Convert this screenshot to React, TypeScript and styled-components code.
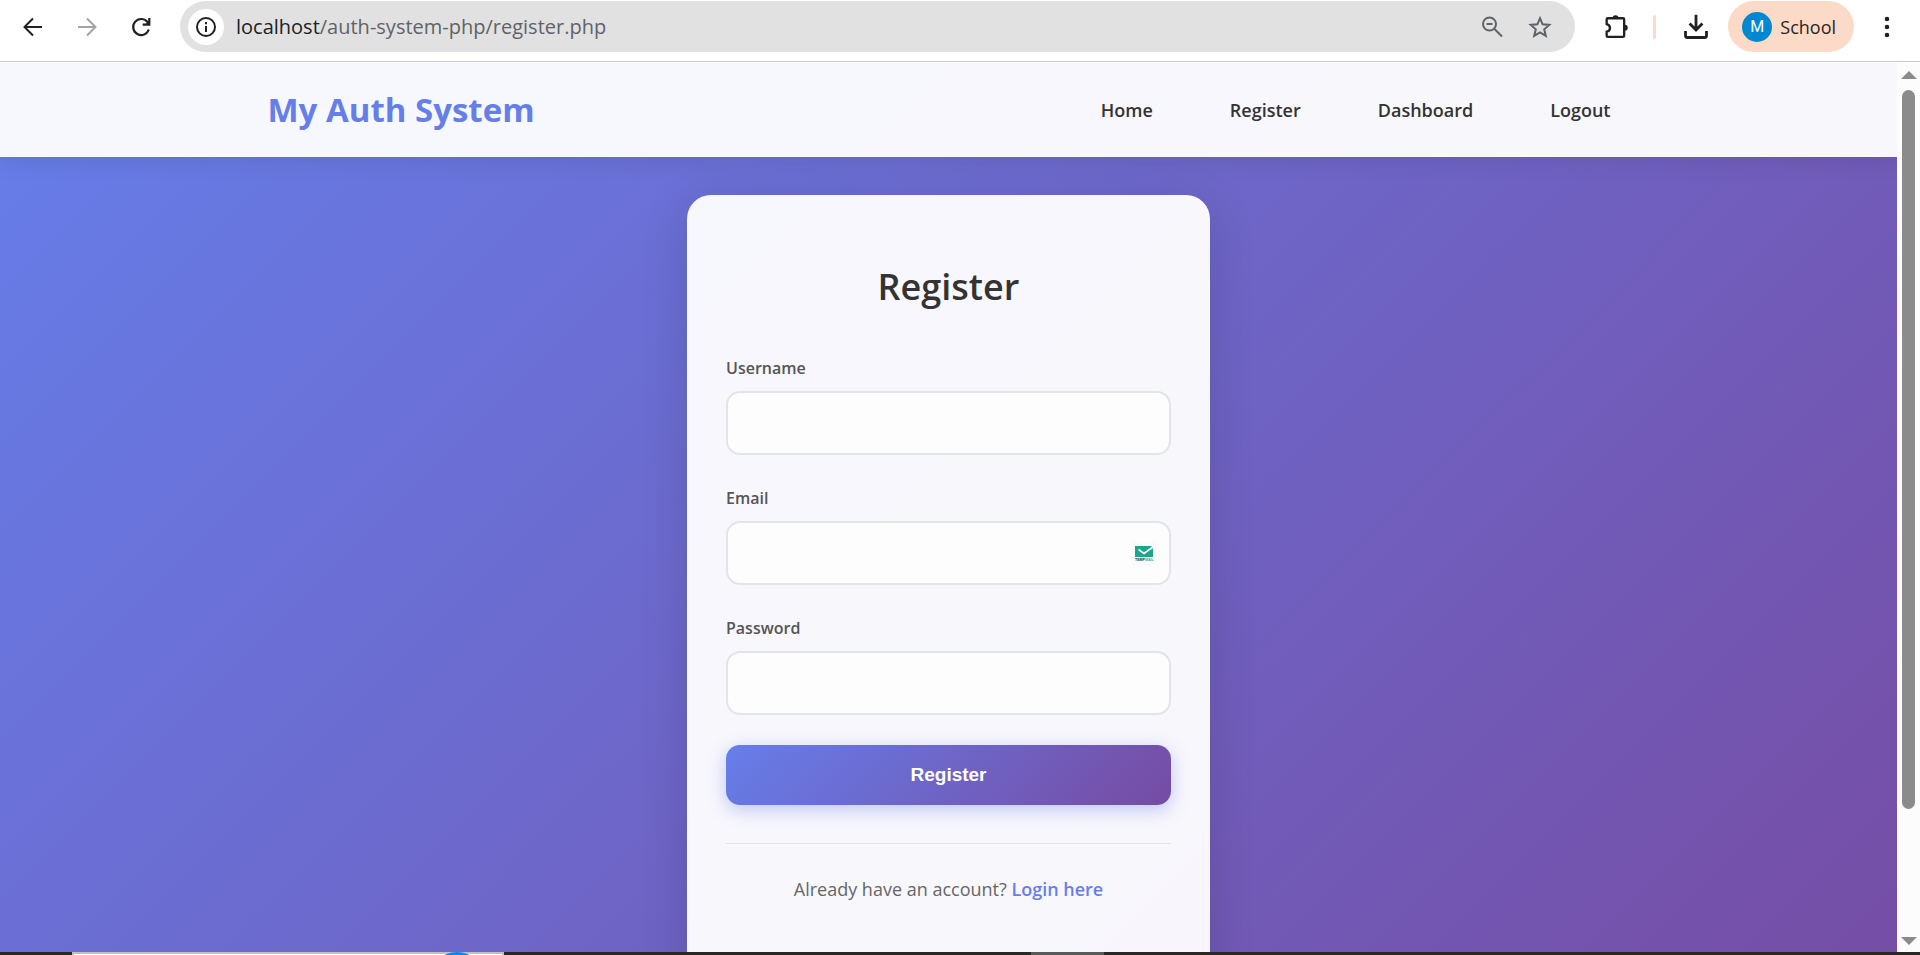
import React from "react";
import styled, { createGlobalStyle } from "styled-components";

const GlobalStyle = createGlobalStyle`
  *, *::before, *::after { box-sizing: border-box; }
  body { margin: 0; font-family: "Segoe UI", "Open Sans", sans-serif; }
`;

const Window = styled.div`
  display: flex;
  flex-direction: column;
  height: 100vh;
  overflow: hidden;
  background: #fff;
`;

/* ---------- browser toolbar ---------- */

const Toolbar = styled.div`
  display: flex;
  align-items: center;
  flex: none;
  height: 62px;
  margin-bottom: 1px;
  padding: 1px 16px 9px 16px;
  background: #fff;
  border-bottom: 1px solid #c8c8c8;
`;

const IconButton = styled.button<{ $color?: string; $gap?: number }>`
  display: grid;
  place-items: center;
  flex: none;
  width: 34px;
  height: 34px;
  margin: 0 ${(p) => p.$gap ?? 0}px 0 0;
  padding: 0;
  border: 0;
  background: none;
  color: ${(p) => p.$color ?? "#202124"};
`;

const AddressBar = styled.div`
  display: flex;
  align-items: center;
  flex: 1;
  height: 51px;
  margin-right: 24px;
  padding: 0 18px 0 8px;
  border-radius: 26px;
  background: #e1e1e1;
`;

const SiteInfo = styled.button`
  display: grid;
  place-items: center;
  width: 36px;
  height: 36px;
  padding: 0;
  border: 0;
  border-radius: 50%;
  background: #fff;
  color: #202124;
`;

const Url = styled.div`
  flex: 1;
  margin-left: 12px;
  font-size: 20px;
  line-height: 28px;
  color: #5f6368;
`;

const Host = styled.span`
  color: #202124;
`;

const Divider = styled.span`
  flex: none;
  width: 3px;
  height: 24px;
  margin-right: 23px;
  border-radius: 2px;
  background: #fcdac8;
`;

const Profile = styled.button`
  display: flex;
  align-items: center;
  gap: 8px;
  flex: none;
  height: 51px;
  margin-right: 16px;
  padding: 0 18px 0 14px;
  border: 0;
  border-radius: 26px;
  background: #fcdac8;
  font: 400 18px "Segoe UI", "Open Sans", sans-serif;
  color: #2b2420;
`;

const Avatar = styled.span`
  display: grid;
  place-items: center;
  width: 30px;
  height: 30px;
  border-radius: 50%;
  background: #0288d1;
  font: 400 16px Roboto, sans-serif;
  color: #fff;
`;

/* ---------- page ---------- */

const Viewport = styled.div`
  display: flex;
  flex: 1;
  min-height: 0;
`;

const Page = styled.div`
  flex: 1;
  overflow: hidden;
  background: linear-gradient(135deg, #667eea 0%, #764ba2 100%) 0 0 / 100% 117%;
`;

const Header = styled.header`
  background: rgba(255, 255, 255, 0.95);
  box-shadow: 0 2px 24px rgba(0, 0, 0, 0.1);
`;

const HeaderInner = styled.div`
  display: flex;
  align-items: center;
  justify-content: space-between;
  max-width: 1394px;
  height: 94px;
  margin: 0 auto;
  padding: 0 16px;
`;

const Logo = styled.h1`
  margin: 0;
  font-size: 33px;
  font-weight: 700;
  line-height: 48px;
  color: #667eea;
`;

const Nav = styled.nav`
  display: flex;
  gap: 77px;
  padding-right: 19px;
`;

const NavLink = styled.a`
  font-size: 18px;
  font-weight: 600;
  line-height: 28px;
  color: #333;
  text-decoration: none;
`;

const Card = styled.main`
  max-width: 523px;
  margin: 38px auto;
  padding: 64px 39px 77px;
  border-radius: 24px;
  background: rgba(255, 255, 255, 0.95);
  box-shadow: 0 10px 48px rgba(0, 0, 0, 0.14);
`;

const Title = styled.h2`
  margin: 0 0 40px;
  font-size: 36px;
  font-weight: 600;
  line-height: 56px;
  text-align: center;
  color: #333;
`;

const Field = styled.div`
  display: flex;
  flex-direction: column;
  gap: 9px;
  margin-bottom: 30px;
`;

const Label = styled.label`
  font-size: 16px;
  font-weight: 600;
  line-height: 27px;
  color: #555;
`;

const InputBox = styled.div`
  display: flex;
  align-items: center;
  height: 64px;
  padding-right: 13px;
  border: 2px solid #e1e5e9;
  border-radius: 14px;
  background: #fdfdfd;
`;

const Input = styled.input`
  flex: 1;
  min-width: 0;
  height: 100%;
  padding: 0 18px;
  border: 0;
  outline: 0;
  background: transparent;
  font-size: 18px;
`;

const Submit = styled.button`
  display: block;
  width: 100%;
  height: 60px;
  border: 0;
  border-radius: 14px;
  background: linear-gradient(135deg, #667eea 0%, #764ba2 100%);
  box-shadow: 0 5px 18px rgba(102, 126, 234, 0.4);
  font: 700 19px "Liberation Sans", Arial, sans-serif;
  color: #fff;
`;

const Footer = styled.p`
  margin: 38px 0 0;
  padding-top: 30px;
  border-top: 1px solid #e1e5e9;
  font-size: 18px;
  line-height: 30px;
  text-align: center;
  color: #666;
`;

const LoginLink = styled.a`
  font-weight: 600;
  color: #667eea;
  text-decoration: none;
`;

/* ---------- scrollbar ---------- */

const Scrollbar = styled.div`
  display: flex;
  flex-direction: column;
  align-items: center;
  flex: none;
  width: 23px;
  padding: 8px 0 7px;
  background: #fcfcfc;
`;

const Track = styled.div`
  flex: 1;
  width: 13px;
  margin: 11px 0;
`;

const Thumb = styled.div`
  height: 86%;
  border-radius: 7px;
  background: #8b8b8b;
`;

/* ---------- desktop strip under the browser ---------- */

const Desktop = styled.div`
  display: flex;
  flex: none;
  height: 3px;
  overflow: hidden;
  background: #2a2724;
`;

const Preview = styled.div`
  display: flex;
  justify-content: flex-end;
  width: 432px;
  margin-left: 72px;
  padding-right: 32px;
  border: 2px solid #c0c0c0;
  border-bottom: 0;
  background: #fff;
`;

const PreviewDot = styled.svg`
  flex: none;
  margin-top: -2px;
`;

const ActiveTab = styled.div`
  width: 73px;
  margin-left: 527px;
  background: #585b57;
`;

const Stroke = ({ children, size = 24, width = 2 }: { children: React.ReactNode; size?: number; width?: number }) => (
  <svg width={size} height={size} viewBox="0 0 24 24" fill="none" stroke="currentColor" strokeWidth={width} aria-hidden="true">
    {children}
  </svg>
);

const Arrow = ({ down = false }: { down?: boolean }) => (
  <svg width="16" height="8" viewBox="0 0 16 8" fill="#8b8b8b" aria-hidden="true">
    <path d={down ? "M0 0H16L8 8Z" : "M0 8H16L8 0Z"} />
  </svg>
);

const TempMailIcon = () => (
  <svg width="24" height="24" viewBox="0 0 24 24" aria-hidden="true">
    <rect width="24" height="24" fill="#fafafa" />
    <path d="M3 5H19L21 7V16H3Z" fill="#1fa58a" />
    <path d="M6.500 8.500L12 12.500L21 6" fill="none" stroke="#fff" strokeWidth="1.600" />
    <text x="3" y="20" fontSize="3.600" fontWeight="700" fontFamily="Liberation Sans, sans-serif" fill="#16324a">
      TEMP<tspan fill="#1fb59a">MAIL</tspan>
    </text>
  </svg>
);

const links = ["Home", "Register", "Dashboard", "Logout"];

const fields = [
  { id: "username", label: "Username", type: "text" },
  { id: "email", label: "Email", type: "email" },
  { id: "password", label: "Password", type: "password" },
];

export default function App() {
  return (
    <Window>
      <GlobalStyle />
      <Toolbar>
        <IconButton aria-label="Back" $gap={20}>
          <Stroke><path d="M21 12H4M12 3.500L3.500 12L12 20.500" /></Stroke>
        </IconButton>
        <IconButton aria-label="Forward" $color="#a3a3a3" $gap={20}>
          <Stroke><path d="M3 12H20M12 3.500L20.500 12L12 20.500" /></Stroke>
        </IconButton>
        <IconButton aria-label="Reload" $gap={22}>
          <Stroke width={2.2}>
            <path d="M19.800 14.500A8 8 0 1 1 18.300 6.800L20 8.800" />
            <path d="M20.300 3V9.600H13.700" />
            <path d="M20.300 5.500V9.600H16Z" fill="currentColor" stroke="none" />
          </Stroke>
        </IconButton>
        <AddressBar>
          <SiteInfo aria-label="Site information">
            <Stroke><circle cx="12" cy="12" r="9" /><path d="M12 11V17M12 7V9.200" /></Stroke>
          </SiteInfo>
          <Url><Host>localhost</Host>/auth-system-php/register.php</Url>
          <IconButton aria-label="Zoom" $color="#5f6368" $gap={14}>
            <Stroke><circle cx="9.500" cy="9" r="6.500" /><path d="M14 13.500L22 21.500M6.500 9H12.500" /></Stroke>
          </IconButton>
          <IconButton aria-label="Bookmark" $color="#5f6368">
            <Stroke><path d="M12 3.200L14.600 9.300L21.300 9.900L16.200 14.300L17.800 20.900L12 17.400L6.200 20.900L7.800 14.300L2.700 9.900L9.400 9.300Z" /></Stroke>
          </IconButton>
        </AddressBar>
        <IconButton aria-label="Extensions" $gap={20}>
          <Stroke size={28} width={2}>
            <path d="M5 4.500H18Q19 4.500 19 5.500V19.500Q19 20.500 18 20.500H5Q4 20.500 4 19.500V16C7.800 15 7.800 10.500 4 9.500V5.500Q4 4.500 5 4.500Z" />
            <path d="M9 4.500A2.600 2.600 0 0 1 14.200 4.500ZM19.500 10A2.600 2.600 0 0 1 19.500 15.200Z" fill="currentColor" stroke="none" />
          </Stroke>
        </IconButton>
        <Divider />
        <IconButton aria-label="Downloads" $gap={15}>
          <Stroke size={28} width={2.4}>
            <path d="M12 1.500V14.500M6.500 9L12 14.500L17.500 9M3 15.500V19.500Q3 21 4.500 21H19.500Q21 21 21 19.500V15.500" />
          </Stroke>
        </IconButton>
        <Profile><Avatar>M</Avatar>School</Profile>
        <IconButton aria-label="Menu">
          <svg width="6" height="22" viewBox="0 0 6 22" fill="currentColor" aria-hidden="true">
            <circle cx="3" cy="3" r="2.300" /><circle cx="3" cy="11" r="2.300" /><circle cx="3" cy="19" r="2.300" />
          </svg>
        </IconButton>
      </Toolbar>

      <Viewport>
        <Page>
          <Header>
            <HeaderInner>
              <Logo>My Auth System</Logo>
              <Nav>
                {links.map((name) => (
                  <NavLink key={name} href={`#${name.toLowerCase()}`}>{name}</NavLink>
                ))}
              </Nav>
            </HeaderInner>
          </Header>
          <Card>
            <Title>Register</Title>
            <form>
              {fields.map((f) => (
                <Field key={f.id}>
                  <Label htmlFor={f.id}>{f.label}</Label>
                  <InputBox>
                    <Input id={f.id} name={f.id} type={f.type} />
                    {f.id === "email" && <TempMailIcon />}
                  </InputBox>
                </Field>
              ))}
              <Submit type="submit">Register</Submit>
            </form>
            <Footer>
              Already have an account? <LoginLink href="#login">Login here</LoginLink>
            </Footer>
          </Card>
        </Page>
        <Scrollbar aria-hidden="true">
          <Arrow />
          <Track><Thumb /></Track>
          <Arrow down />
        </Scrollbar>
      </Viewport>

      <Desktop>
        <Preview>
          <PreviewDot width="26" height="26" viewBox="0 0 26 26" aria-hidden="true">
            <circle cx="13" cy="27" r="27" fill="#0a84ff" />
          </PreviewDot>
        </Preview>
        <ActiveTab />
      </Desktop>
    </Window>
  );
}
